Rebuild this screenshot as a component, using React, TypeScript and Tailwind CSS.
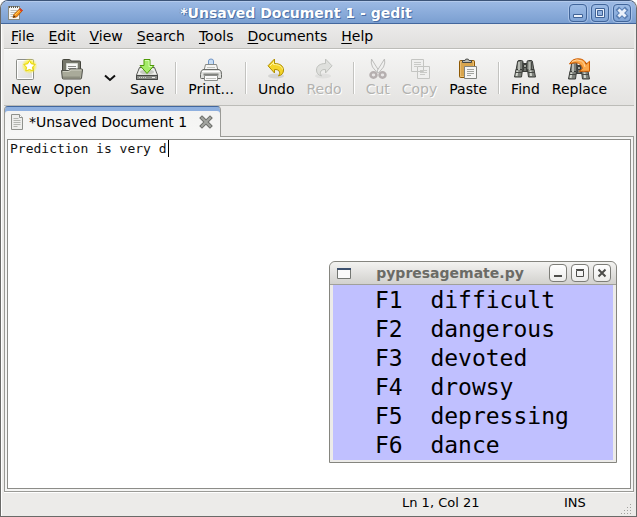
import type { ReactNode } from "react";

const INK = "#555753";

function Svg({ children, size = 24 }: { children: ReactNode; size?: number }) {
  return (
    <svg width={size} height={size} viewBox={`0 0 ${size} ${size}`} aria-hidden="true" className="block shrink-0">
      {children}
    </svg>
  );
}

function NewIcon() {
  return (
    <Svg>
      <defs>
        <radialGradient id="glow">
          <stop offset="0.45" stopColor="#fff32a" />
          <stop offset="1" stopColor="#fff32a" stopOpacity="0" />
        </radialGradient>
        <linearGradient id="sheet" x1="0" y1="0" x2="1" y2="1">
          <stop offset="0" stopColor="#f4f4f3" />
          <stop offset="1" stopColor="#dcdcda" />
        </linearGradient>
      </defs>
      <rect x="2.5" y="1.5" width="17" height="20" rx="1" fill="url(#sheet)" stroke="#8b8d88" />
      <path d="M3.500 2.500h15v18h-15z" fill="none" stroke="#fff" />
      <circle cx="15.500" cy="8" r="8" fill="url(#glow)" />
      <path d="M15.500 2.500l1.800 3.300 3.900.6-2.700 2.800.7 3.800-3.700-1.500-3.700 1.500.7-3.800-2.700-2.800 3.900-.6z" fill="#fff" stroke="#e8d300" />
    </Svg>
  );
}

function OpenIcon() {
  return (
    <Svg>
      <path d="M2.500 20V2.500q0-1 1-1h6q1 0 1.500 1.500h8.500q1 0 1 1V20z" fill="#77786c" stroke="#44453d" />
      <path d="M6.500 5.500h11v10h-11z" fill="#f7f7f6" stroke="#d3d7cf" />
      <path d="M8 8.500h8M8 10.500h8" stroke="#888a85" />
      <path d="M1.500 12.500h7l2-1.500h11.500q.6 0 .5 1l-1 8q-.1 1-1 1H3.500q-1 0-1.200-1z" fill="#a9aa9a" stroke="#50514a" />
      <path d="M3 13.500h6l2-1.500h10.500" fill="none" stroke="#cfd0c3" />
      <path d="M3 19.500h17" stroke="#8d8e80" strokeWidth="2" />
    </Svg>
  );
}

function SaveIcon() {
  return (
    <Svg>
      <path d="M4.500 9.500h15l3 7.500v4.500h-21V17z" fill="#d3d7cf" stroke="#5b5d59" />
      <path d="M5 10.500h14l2.500 6h-19z" fill="#efefed" />
      <ellipse cx="12" cy="14" rx="7" ry="2.500" fill="#c5c8c2" />
      <path d="M1.500 17.500h21v4h-21z" fill="#8b8d89" stroke="#454744" />
      <path d="M4 19.500h8" stroke="#d3d7cf" strokeDasharray="1 1" />
      <path d="M17 19.500h3" stroke="#eeeeec" />
      <path d="M9 1.500h6v6h4L12 15.500 5 7.500h4z" fill="#a5ec69" stroke="#4e9a06" />
      <path d="M10 2.500h4v6h3" fill="none" stroke="#d4ffae" />
    </Svg>
  );
}

function PrintIcon() {
  return (
    <Svg>
      <path d="M9.500 8V3q0-2 2.500-2t2.500 2v5z" fill="#c5dcf5" stroke="#7195c5" />
      <path d="M6.500 6.500h11l1.500 6H5z" fill="#f4f4f3" stroke="#888a85" />
      <path d="M4 11.500h16q3 1 2.500 5v3q0 1-1 1h-19q-1 0-1-1v-3q0-4 2.500-5z" fill="#dfe0dd" stroke="#666864" />
      <path d="M3 13.500h18" stroke="#fff" />
      <path d="M4.500 16.500h15" stroke="#80827e" strokeWidth="2" />
      <path d="M5.500 17.500h13v5h-13z" fill="#fafafa" stroke="#8c8e8a" />
      <path d="M7 20.500h10M8 9.500h8" stroke="#c2c4bf" />
    </Svg>
  );
}

function UndoIcon() {
  return (
    <Svg>
      <ellipse cx="12" cy="18" rx="8" ry="2.500" fill="#000" opacity="0.1" />
      <path d="M10.500 1v4.500c5.500 0 9 2.500 9 6.500 0 3-1.500 5-5 6 1.500-2 1.500-3.500.5-5-1-1.300-2.300-1.500-4.500-1.500V15L4 7.800z" fill="#f5d52a" stroke="#b08f00" strokeLinejoin="round" />
      <path d="M9.500 3.500v3c5.500 0 8.500 2 9 5M6 8l3.500-3.500" fill="none" stroke="#fff59a" />
    </Svg>
  );
}

function RedoIcon() {
  return (
    <Svg>
      <ellipse cx="11" cy="18" rx="8" ry="2.500" fill="#000" opacity="0.05" />
      <path d="M13.500 1v4.500c-5.500 0-9 2.500-9 6.500 0 3 1.500 5 5 6-1.500-2-1.500-3.500-.5-5 1-1.300 2.300-1.500 4.500-1.500V15L20 7.800z" fill="#dfe0dd" stroke="#c0c2be" strokeLinejoin="round" />
    </Svg>
  );
}

function CutIcon() {
  return (
    <Svg>
      <path d="M5.500 1q-1 4 1 8l5 6 1.500-2z" fill="#f0f0ef" stroke="#bdbdbb" />
      <path d="M18.500 1q1 4-1 8l-5 6-1.500-2z" fill="#f0f0ef" stroke="#bdbdbb" />
      <ellipse cx="7.500" cy="17" rx="3" ry="2.700" fill="#e8e6e6" stroke="#b5afaf" strokeWidth="2.500" />
      <ellipse cx="16.500" cy="17" rx="3" ry="2.700" fill="#e8e6e6" stroke="#b5afaf" strokeWidth="2.500" />
    </Svg>
  );
}

function CopyIcon() {
  return (
    <Svg>
      <path d="M3.500 1.500h12v12h-12zM9.500 8.500h12v12h-12z" fill="#efefee" stroke="#c4c5c2" />
      <path d="M6 4.500h7M6 6.500h7M6 8.500h3M12 12.500h7M12 14.500h7M12 16.500h5" stroke="#c9cac7" />
    </Svg>
  );
}

function PasteIcon() {
  return (
    <Svg>
      <rect x="3.500" y="2.500" width="15" height="17" rx="1" fill="#c99136" stroke="#8f5902" />
      <path d="M4.500 3.500h13v15h-13z" fill="#d8a54d" stroke="#e9bd72" />
      <path d="M6.500 4.500V2.500h2.500q0-1.500 2-1.500t2 1.500h2.500v2z" fill="#b9bcb6" stroke="#454744" />
      <path d="M8.500 8.500h12v12h-12z" fill="#f6f6f5" stroke="#81837e" />
      <path d="M11 11.500h7M11 13.500h7M11 15.500h7M11 17.500h4" stroke="#a3a5a0" />
    </Svg>
  );
}

function Binoculars() {
  return (
    <g>
      <path d="M9 5.500h6v8H9z" fill="#6f726c" stroke="#3a3c39" />
      <path d="M4.500 4q0-1.500 1.500-1.500h2.500q1.500 0 1.500 1.500l.5 8.500H3zM19.500 4q0-1.500-1.500-1.500h-2.500q-1.500 0-1.500 1.500l-.5 8.500H21z" fill="#7d807a" stroke="#3a3c39" />
      <path d="M3 11.500h6.500l-1 7.500h-7zM21 11.500h-6.500l1 7.500h7z" fill="#7d807a" stroke="#3a3c39" strokeLinejoin="round" />
      <path d="M6 4v8M16.500 4v8" stroke="#b9bcb5" strokeWidth="2" />
      <path d="M4.500 12.500L3.500 18M17.500 12.500l.5 5.500" stroke="#d3d7cf" strokeWidth="2" />
      <path d="M9.500 4v7M18.500 4v7M3 14.500h6M15 14.500h6" stroke="#484a46" />
      <path d="M10.500 6.500h3v3h-3z" fill="#a3a69f" stroke="#3a3c39" />
    </g>
  );
}

function FindIcon() {
  return (
    <Svg>
      <Binoculars />
    </Svg>
  );
}

function ReplaceIcon() {
  return (
    <Svg>
      <g transform="translate(0 2)">
        <Binoculars />
      </g>
      <path d="M2.500 6Q5 .8 11 .8q7 0 8 5.500l3.500-3v10h-10l3-3q-1.500-5-6-5.500-3.500-.3-7 1.200z" fill="#fba84a" stroke="#ce5c00" strokeLinejoin="round" />
      <path d="M5 3.500q5-3 9.500-.5 3 1.500 3.500 6" fill="none" stroke="#ffd6a0" />
    </Svg>
  );
}

function NotepadIcon() {
  return (
    <Svg size={16}>
      <rect x="1.500" y="1.500" width="11" height="13" fill="#f5f5f3" stroke="#8a8a80" />
      <path d="M2 2h10" stroke="#5b5b54" strokeWidth="2" strokeDasharray="1 1" />
      <path d="M3.500 5.500h7M3.500 7.500h7M3.500 9.500h5M3.500 11.500h3" stroke="#bbbdb7" />
      <path d="M6 12.500l1-3L13 3.500l2.500 2L9.500 12z" fill="#f7941d" stroke="#b85c00" />
      <path d="M8 10l5.500-5.500" stroke="#ffd34e" />
      <path d="M12.500 4l2.500 2" stroke="#d83a2a" strokeWidth="2" />
      <path d="M6 12.500l1-2 1.500 1.300z" fill="#2e2e2e" />
    </Svg>
  );
}

function DocumentIcon() {
  return (
    <Svg size={16}>
      <path d="M2.500.5h8l3 3v12h-11z" fill="#eeeeec" stroke="#8f918c" strokeLinejoin="round" />
      <path d="M10.500.5v3h3" fill="#fff" stroke="#8f918c" />
      <path d="M4.500 4.500h5M4.500 6.500h7M4.500 8.500h7M4.500 10.500h7M4.500 12.500h4" stroke="#b3b5b0" />
    </Svg>
  );
}

const MENUS: [string, string][] = [
  ["F", "ile"],
  ["E", "dit"],
  ["V", "iew"],
  ["S", "earch"],
  ["T", "ools"],
  ["D", "ocuments"],
  ["H", "elp"],
];

function Tool({ icon, label, disabled = false }: { icon: ReactNode; label: string; disabled?: boolean }) {
  return (
    <button
      type="button"
      disabled={disabled}
      className="flex flex-col items-center px-[6px] pt-2 disabled:text-[#b3b3b0] disabled:[text-shadow:1px_1px_0_#fff]"
    >
      {icon}
      <span className="leading-[14px]">{label}</span>
    </button>
  );
}

function Separator() {
  return <div className="mx-[5px] mt-3 h-8 w-[2px] border-l border-[#c3c3c0] bg-white" />;
}

const GLYPHS = ["Minimize", "Maximize", "Close"] as const;

function Glyph({ name, active }: { name: (typeof GLYPHS)[number]; active: boolean }) {
  const edge = active ? "#3f6296" : "#4d4d4a";
  const fill = active ? "#eaf1fb" : "#4d4d4a";
  if (name === "Minimize")
    return (
      <Svg size={16}>
        {active ? <path d="M3.500 9.500h9v3h-9z" fill={fill} stroke={edge} /> : <path d="M4 11h8" stroke={fill} strokeWidth="2" />}
      </Svg>
    );
  if (name === "Maximize")
    return (
      <Svg size={16}>
        {active ? (
          <>
            <path d="M3.500 3.500h9v9h-9z" fill={fill} stroke={edge} />
            <path d="M5.500 5.500h5v5h-5z" fill="#8fb0df" stroke={edge} />
          </>
        ) : (
          <path d="M4.500 5.500h7v6h-7zM4 4.500h8" fill="none" stroke={fill} />
        )}
      </Svg>
    );
  return (
    <Svg size={16}>
      {active && <path d="M5 5l6 6M11 5l-6 6" stroke="#5b80b5" strokeWidth="5" strokeLinecap="square" />}
      <path d="M4.500 4.500l7 7M11.500 4.500l-7 7" stroke={fill} strokeWidth={active ? 3 : 2} />
    </Svg>
  );
}

function WindowButtons({ active }: { active: boolean }) {
  return (
    <div className="flex gap-1">
      {GLYPHS.map((name) => (
        <button
          key={name}
          type="button"
          aria-label={name}
          className={
            active
              ? "flex size-[18px] items-center justify-center rounded border border-[#41659a] bg-linear-to-b from-[#9dbce6] to-[#7fa4d6] shadow-[0_0_0_1px_#a9c3e8]"
              : "flex size-[18px] items-center justify-center rounded border border-[#7d7d78] bg-linear-to-b from-white to-[#ececea]"
          }
        >
          <Glyph name={name} active={active} />
        </button>
      ))}
    </div>
  );
}

const PREDICTIONS = ["difficult", "dangerous", "devoted", "drowsy", "depressing", "dance"];

function PredictionWindow() {
  return (
    <section className="absolute top-[260px] left-[328px] w-72 rounded-t-md border border-[#85857f] bg-[#ecebe9]">
      <header className="flex h-[23px] items-center rounded-t-md border-b border-[#a0a09b] bg-linear-to-b from-[#f3f3f1] to-[#d2d1ce] pr-[5px] pl-[7px]">
        <svg width="14" height="11" viewBox="0 0 14 11" aria-hidden="true">
          <path d="M.5.5h13v10H.5z" fill="#fafafa" stroke="#747772" />
          <path d="M0 1h14" stroke="#3c506e" strokeWidth="2" />
        </svg>
        <h2 className="flex-1 text-center font-bold text-[#6b6b66]">pypresagemate.py</h2>
        <WindowButtons active={false} />
      </header>
      <ul className="mx-[3px] mb-[2px] bg-[#c0c0ff] pt-px pl-[42px] font-['DejaVu_Sans_Mono',monospace] text-[23px] leading-[29px] text-black">
        {PREDICTIONS.map((word, index) => (
          <li key={word} className="whitespace-pre">{`F${index + 1}  ${word}`}</li>
        ))}
      </ul>
    </section>
  );
}

export default function App() {
  return (
    <div className="relative flex h-screen flex-col overflow-hidden rounded-t-lg border border-[#6a6a68] border-t-[#3c5479] bg-[#ecebe9] font-['DejaVu_Sans',sans-serif] text-sm text-black">
      <header className="flex h-[23px] shrink-0 items-center border-t border-b border-t-[#b3caec] border-b-[#43679d] bg-linear-to-b from-[#9bb9e4] to-[#7b9fd1] pr-[5px] pl-[6px]">
        <NotepadIcon />
        <h1 className="flex-1 text-center font-bold text-white [text-shadow:1px_1px_0_#4a6ea5,-1px_0_0_#6589bd]">
          *Unsaved Document 1 - gedit
        </h1>
        <WindowButtons active />
      </header>

      <div className="flex min-h-0 flex-1 flex-col border-l border-white px-[2px]">
        <nav className="flex h-[25px] shrink-0 items-center border-b border-[#bcbcb8] bg-linear-to-b from-[#ecebea] to-[#e0dfdd]">
          {MENUS.map(([key, rest]) => (
            <button key={key} type="button" className="px-[7px] leading-5">
              <u className="underline-offset-2">{key}</u>
              {rest}
            </button>
          ))}
        </nav>

        <div role="toolbar" className="flex h-[57px] shrink-0 items-start border-t border-b border-t-white border-b-[#bcbcb8] bg-linear-to-b from-[#f5f5f4] to-[#e4e3e1] pl-[1px]">
          <Tool icon={<NewIcon />} label="New" />
          <Tool icon={<OpenIcon />} label="Open" />
          <button type="button" aria-label="Open recent" className="flex h-[55px] w-[27px] items-center justify-center">
            <svg width="12" height="8" viewBox="0 0 12 8" aria-hidden="true">
              <path d="M1 1.500l5 4.500 5-4.500" fill="none" stroke="#111" strokeWidth="2" />
            </svg>
          </button>
          <Tool icon={<SaveIcon />} label="Save" />
          <Separator />
          <Tool icon={<PrintIcon />} label="Print..." />
          <Separator />
          <Tool icon={<UndoIcon />} label="Undo" />
          <Tool icon={<RedoIcon />} label="Redo" disabled />
          <Separator />
          <Tool icon={<CutIcon />} label="Cut" disabled />
          <Tool icon={<CopyIcon />} label="Copy" disabled />
          <Tool icon={<PasteIcon />} label="Paste" />
          <Separator />
          <Tool icon={<FindIcon />} label="Find" />
          <Tool icon={<ReplaceIcon />} label="Replace" />
        </div>

        <div role="tablist" className="flex h-[31px] shrink-0">
          <div className="flex w-[217px] items-center overflow-hidden rounded-t border border-b-0 border-[#9a9a96] border-t-[#43679d] bg-linear-to-b from-[#f3f3f2] to-[#f7f7f6] shadow-[inset_0_4px_0_#8fb0df]">
            <button type="button" role="tab" aria-selected="true" className="flex flex-1 items-center gap-1 pl-1">
              <DocumentIcon />
              <span className="whitespace-nowrap">*Unsaved Document 1</span>
            </button>
            <button type="button" aria-label="Close tab" className="pr-[6px]">
              <Svg size={16}>
                <path d="M4 4l8 8M12 4l-8 8" stroke="#6f716d" strokeWidth="4" strokeLinecap="square" />
                <path d="M4 4l8 8M12 4l-8 8" stroke="#a3a5a0" strokeWidth="2" strokeLinecap="square" />
              </Svg>
            </button>
          </div>
          <div className="flex-1 border-b border-[#9a9a96]" />
        </div>

        <main className="flex min-h-0 flex-1 flex-col border border-t-0 border-[#9a9a96] bg-[#f5f5f4] p-[2px]">
          <div className="relative flex flex-1 border border-[#8c8c88] bg-white">
            <textarea
              aria-label="Document text"
              spellCheck={false}
              defaultValue="Prediction is very d"
              className="flex-1 resize-none px-[2px] font-['DejaVu_Sans_Mono',monospace] text-[13px] leading-[17px] text-[#111] outline-none"
            />
            <span aria-hidden="true" className="absolute top-0 left-[160px] h-[17px] w-px bg-black" />
          </div>
        </main>

        <footer className="flex h-6 shrink-0 items-center border-t border-white text-[13px]">
          <span className="flex-1" />
          <span className="w-[162px] pb-[2px]">Ln 1, Col 21</span>
          <span className="w-14 pb-[2px]">INS</span>
          <svg width="14" height="14" viewBox="0 0 14 14" aria-hidden="true" className="self-end">
            <path d="M10 2.500h3M7 5.500h6M4 8.500h9M1 11.500h12" stroke={INK} strokeOpacity="0.5" strokeDasharray="1 2" />
          </svg>
        </footer>
      </div>

      <PredictionWindow />
    </div>
  );
}
